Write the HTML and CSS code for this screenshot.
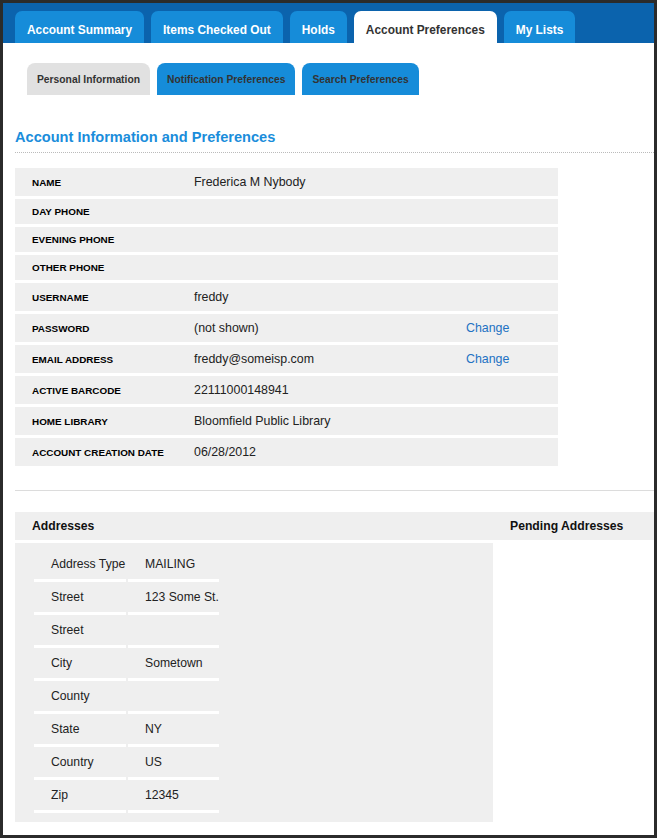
FILE: index.html
```html
<!DOCTYPE html>
<html lang="en">
<head>
<meta charset="UTF-8" />
<meta name="viewport" content="width=device-width, initial-scale=1.0"/>
<title>Account Preferences</title>
<link rel="stylesheet" href="styles.css">
</head>
<body>
<div class="frame">
  <!-- Main navigation -->
  <div class="main-tabs">
    <a class="tab" href="#">Account Summary</a>
    <a class="tab" href="#">Items Checked Out</a>
    <a class="tab" href="#">Holds</a>
    <a class="tab active" href="#">Account Preferences</a>
    <a class="tab" href="#">My Lists</a>
  </div>

  <div class="sub-tabs">
    <a class="subtab active" href="#">Personal Information</a>
    <a class="subtab" href="#">Notification Preferences</a>
    <a class="subtab" href="#">Search Preferences</a>
  </div>

  <div class="content">
    <h2 class="section-title">Account Information and Preferences</h2>

    <div class="info-list">
      <div class="info-row"><div class="label">Name</div><div class="value">Frederica M Nybody</div><div class="action"></div></div>
      <div class="info-row"><div class="label">Day Phone</div><div class="value"></div><div class="action"></div></div>
      <div class="info-row"><div class="label">Evening Phone</div><div class="value"></div><div class="action"></div></div>
      <div class="info-row"><div class="label">Other Phone</div><div class="value"></div><div class="action"></div></div>
      <div class="info-row"><div class="label">Username</div><div class="value">freddy</div><div class="action"></div></div>
      <div class="info-row"><div class="label">Password</div><div class="value">(not shown)</div><div class="action"><a href="#">Change</a></div></div>
      <div class="info-row"><div class="label">Email Address</div><div class="value">freddy@someisp.com</div><div class="action"><a href="#">Change</a></div></div>
      <div class="info-row"><div class="label">Active Barcode</div><div class="value">22111000148941</div><div class="action"></div></div>
      <div class="info-row"><div class="label">Home Library</div><div class="value">Bloomfield Public Library</div><div class="action"></div></div>
      <div class="info-row"><div class="label">Account Creation Date</div><div class="value">06/28/2012</div><div class="action"></div></div>
    </div>

    <hr class="divider">

    <div class="addr-header">
      <div>Addresses</div>
      <div>Pending Addresses</div>
    </div>

    <div class="addr-box">
      <table class="addr-table">
        <tr><td>Address Type</td><td>MAILING</td></tr>
        <tr><td>Street</td><td>123 Some St.</td></tr>
        <tr><td>Street</td><td></td></tr>
        <tr><td>City</td><td>Sometown</td></tr>
        <tr><td>County</td><td></td></tr>
        <tr><td>State</td><td>NY</td></tr>
        <tr><td>Country</td><td>US</td></tr>
        <tr><td>Zip</td><td>12345</td></tr>
      </table>
    </div>
  </div>
</div>
</body>
</html>
```

FILE: styles.css
```css
:root {
  --frame: #2b2b2b;
  --bar: #0b63ad;
  --tab: #168cd9;
  --row-bg: #efefef;
  --text: #222222;
  --link: #2272c3;
  --font: "Liberation Sans", Arial, sans-serif;
}

html, body {
  margin: 0;
  padding: 0;
}

body {
  font-family: var(--font);
  color: var(--text);
  background: var(--frame);
}

.frame {
  box-sizing: border-box;
  height: 838px;
  border: 3px solid var(--frame);
  background: #fff;
  overflow: hidden;
}

/* top tabs */
.main-tabs {
  display: flex;
  gap: 7px;
  align-items: flex-end;
  height: 40px;
  box-sizing: border-box;
  padding: 8px 0 0 12px;
  background: var(--bar);
}

.tab {
  display: block;
  box-sizing: border-box;
  height: 32px;
  padding: 12px 12px 0;
  line-height: 15px;
  font-size: 11.9px;
  font-weight: bold;
  color: #fff;
  text-decoration: none;
  background: var(--tab);
  border-radius: 7px 7px 0 0;
}

.tab.active {
  background: #fff;
  color: #333;
}

/* sub tabs */
.sub-tabs {
  display: flex;
  gap: 7px;
  padding: 20px 0 0 24px;
}

.subtab {
  display: block;
  box-sizing: border-box;
  height: 32px;
  padding: 11px 10px 0;
  line-height: 12px;
  font-size: 10.3px;
  font-weight: bold;
  color: #333;
  text-decoration: none;
  background: var(--tab);
  border-radius: 8px 8px 0 0;
}

.subtab.active {
  background: #e1e1e1;
}

.content {
  padding-left: 12px;
}

.section-title {
  margin: 34px 0 0;
  padding-bottom: 6px;
  font-size: 14.6px;
  line-height: 17px;
  color: #1a8ddb;
  border-bottom: 1px dotted #bbb;
}

/* account info rows */
.info-list {
  width: 543px;
  margin-top: 15px;
}

.info-row {
  display: grid;
  grid-template-columns: 179px 272px 1fr;
  align-items: center;
  background: var(--row-bg);
  margin-bottom: 3px;
}

.info-row .label {
  padding: 7px 0 7px 17px;
  font-size: 9.9px;
  line-height: 11px;
  font-weight: bold;
  text-transform: uppercase;
  color: #000;
}

.info-row .value,
.info-row .action {
  padding: 7px 0;
  font-size: 12.4px;
  line-height: 14px;
}

.action a {
  color: var(--link);
  text-decoration: none;
}

.divider {
  margin: 24px 0 0;
  border: 0;
  border-top: 1px solid #dcdcdc;
  height: 0;
}

/* addresses */
.addr-header {
  display: grid;
  grid-template-columns: 478px 1fr;
  margin-top: 21px;
  background: var(--row-bg);
  font-size: 12.2px;
  line-height: 14px;
  font-weight: bold;
  color: #111;
}

.addr-header div {
  padding: 7px 0 7px 17px;
}

.addr-box {
  width: 478px;
  margin-top: 3px;
  padding: 6px 0 9px 17px;
  box-sizing: border-box;
  background: var(--row-bg);
}

.addr-table {
  border-collapse: separate;
  border-spacing: 2px 0;
  font-size: 12.2px;
  line-height: 14px;
}

.addr-table td {
  box-sizing: border-box;
  height: 33px;
  padding: 8px 0 8px 17px;
  border-bottom: 3px solid #fff;
  vertical-align: middle;
}

.addr-table td:first-child {
  width: 92px;
}

.addr-table td:last-child {
  width: 91px;
}
```
